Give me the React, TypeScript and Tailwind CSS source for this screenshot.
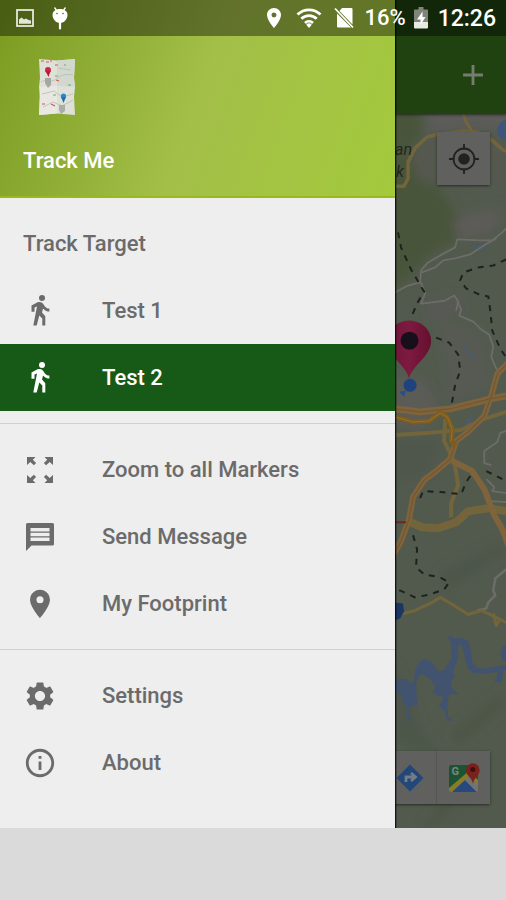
import { ComponentType, useState } from "react";
import {
    MdAdd,
    MdInfoOutline,
    MdPlace,
    MdSettings,
} from "react-icons/md";

interface IIcon {
    size?: number
    className?: string
}

interface IDrawerItem {
    label: string
    icon: ComponentType<IIcon>
}

function WalkIcon({ size, className }: IIcon) {
    return (
        <svg width={size} height={size} viewBox="0 0 34 34" fill="currentColor" className={className}>
            <circle cx="19" cy="4" r="3" />
            <path d="M14.500 8.300l-6 3.200v6.200h3v-4.300l2.500-1L10.300 31.500h3.400l2.600-10 3 3v7h3V22.200l-3.300-3.600 1-4.200c1.700 2 3.800 3.100 6.400 3.200v-3c-2.300-.2-4-1.300-5.200-3.200-1.400-2.500-3-3.900-6.700-3.100z" />
        </svg>
    )
}

function ZoomOutIcon({ size, className }: IIcon) {
    return (
        <svg width={size} height={size} viewBox="0 0 34 34" fill="currentColor" className={className}>
            <path d="M4 4h8.500L9.800 6.700l3.300 3.300-2.200 2.200-3.600-3.300L4 12z" />
            <path d="M30 4h-8.500l2.700 2.700-3.300 3.300 2.200 2.200 3.600-3.300L30 12z" />
            <path d="M4 30h8.500l-2.700-2.700 3.300-3.300-2.200-2.200-3.600 3.300L4 22z" />
            <path d="M30 30h-8.500l2.700-2.700-3.300-3.300 2.200-2.200 3.600 3.300L30 22z" />
        </svg>
    )
}

function MessageIcon({ size, className }: IIcon) {
    return (
        <svg width={size} height={size} viewBox="0 0 34 34" fill="currentColor" className={className}>
            <path fillRule="evenodd" d="M4.500 3h25A1.500 1.500 0 0 1 31 4.500v19.500a1.500 1.500 0 0 1-1.500 1.500H8.500L3 31V4.500A1.500 1.500 0 0 1 4.500 3zM7.500 8v3.500h19V8zM7.500 12.800v3.400h19v-3.400zM7.500 17.500V21h19v-3.500z" />
        </svg>
    )
}

const targets: IDrawerItem[] = [
    { label: "Test 1", icon: WalkIcon },
    { label: "Test 2", icon: WalkIcon },
]

const actions: IDrawerItem[] = [
    { label: "Zoom to all Markers", icon: ZoomOutIcon },
    { label: "Send Message", icon: MessageIcon },
    { label: "My Footprint", icon: MdPlace },
]

const general: IDrawerItem[] = [
    { label: "Settings", icon: MdSettings },
    { label: "About", icon: MdInfoOutline },
]

function StatusBar() {
    return (
        <div className="absolute inset-x-0 top-0 z-20 flex h-9 items-center bg-black/40 pl-4 pr-2.5 text-white">
            <svg width="18" height="18" viewBox="0 0 18 18" className="opacity-85">
                <rect x="1" y="1" width="16" height="16" fill="none" stroke="currentColor" strokeWidth="1.8" />
                <path d="M3 14.800V10.500l2.500-2 2.500 2 2-1 2.500 1.500 2.500.5v3.300z" fill="currentColor" />
            </svg>
            <svg width="18" height="24" viewBox="0 0 18 24" className="ml-[17px]">
                <path d="M3.500 1.500 6 5M14.500 1.500 12 5" stroke="currentColor" strokeWidth="1.300" />
                <path d="M9 3c4.500 0 7.500 2.500 7.500 6S13.500 17 9 17 1.500 12.500 1.500 9 4.500 3 9 3z" fill="currentColor" />
                <path d="M9 16v6.500" stroke="currentColor" strokeWidth="2.200" strokeLinecap="round" />
                <circle cx="6" cy="7.500" r=".8" fill="#4f6417" />
                <circle cx="12" cy="7.500" r=".8" fill="#4f6417" />
            </svg>
            <div className="ml-auto flex items-center">
                <MdPlace size={24} />
                <svg width="26" height="22" viewBox="0 0 26 22" fill="none" stroke="currentColor" strokeWidth="2.800" className="ml-2.5">
                    <path d="M1.500 7.500C8 1.200 18 1.200 24.500 7.500M5.300 11.800c4.400-4.200 11-4.200 15.400 0M9 16c2.300-2.200 5.700-2.200 8 0" />
                    <path d="M10.200 17.700a4 4 0 0 1 5.600 0L13 21z" fill="currentColor" stroke="none" />
                </svg>
                <svg width="20" height="22" viewBox="0 0 20 22" className="ml-3">
                    <path d="M8 1h9.500a1 1 0 0 1 1 1v15.500L5.500 4z" fill="currentColor" />
                    <path d="M3 6.500 17 20.500H4a1 1 0 0 1-1-1z" fill="currentColor" />
                    <path d="M1 1.500 19 20.500" stroke="currentColor" strokeWidth="1.800" />
                </svg>
                <span className="ml-2.5 text-[22px] font-medium leading-none">16%</span>
                <svg width="14" height="22" viewBox="0 0 14 22" className="ml-2">
                    <path d="M4.500 0h5v2.500H13a1 1 0 0 1 1 1V15H0V3.500a1 1 0 0 1 1-1h3.500z" fill="#7f857b" />
                    <path d="M0 15h14v5.500a1 1 0 0 1-1 1H1a1 1 0 0 1-1-1z" fill="#e8eae6" />
                    <path d="M8.500 4.500 3 12.500h3.500V18l5-8H8.500z" fill="#fff" />
                </svg>
                <span className="ml-2.5 text-[23px] font-medium leading-none">12:26</span>
            </div>
        </div>
    )
}

function AppThumbnail() {
    return (
        <svg width="36" height="56" viewBox="0 0 36 56" className="ml-4">
            <path d="M0 0 18 1.500 36 0 35 19 36 28 35 38 36 56 18 54.500 0 56 1 38 0 28 1 19z" fill="#dfe1d8" />
            <path d="M18 1.500 36 0 35 19 36 28 18 27z" fill="#d3d8cf" />
            <path d="M1 28 18 27v27.500L0 56z" fill="#e8e7e1" />
            <path d="M2 23c6-4 9 2 15-3s12-5 17-4M3 35l12-3 8 6 11-3M4 48l10-5 9 4 11-6M19 9l13 2" fill="none" stroke="#b3beb4" strokeWidth=".8" />
            <path d="M6 19h6v7l-3 3-3-5z" fill="#a3a9a2" />
            <path d="M20 46h6v6l-4 3-2-4z" fill="#a9ada8" />
            <path d="M2 2h3M7 3h3M11 2h2M16 6h3M17 21l3 1M12 45l4 2M3 45h3" stroke="#d4565e" strokeWidth="1.200" />
            <path d="M16 17h3M25 6h2M29 26h3M14 36h3" stroke="#77a869" strokeWidth="1.200" />
            <circle cx="9" cy="11" r="3" fill="#cf2744" />
            <path d="M6.500 12h5l-2 6z" fill="#b51d3a" />
            <circle cx="24.500" cy="37" r="2.600" fill="#2b87cc" />
            <path d="M22 38h5l-2.500 6z" fill="#1f6fae" />
        </svg>
    )
}

interface IDrawerSection {
    title?: string
    items: IDrawerItem[]
    selected: string
    onSelect: (label: string) => void
}

function DrawerSection({ title, items, selected, onSelect }: IDrawerSection) {
    return (
        <section className="py-3">
            {title ? (<h2 className="flex h-[67px] items-center px-[23px]">{title}</h2>) : (<></>)}
            <ul>
                {items.map(({ label, icon: Icon }) => (
                    <li key={label}>
                        <button
                            type="button"
                            onClick={() => onSelect(label)}
                            className={`${selected === label ? 'bg-[#175a17] text-white' : ''} flex h-[67px] w-full cursor-pointer items-center gap-[45px] px-[23px] text-left`}
                        >
                            <Icon size={34} className="shrink-0" />
                            {label}
                        </button>
                    </li>
                ))}
            </ul>
        </section>
    )
}

function MapCanvas() {
    return (
        <svg viewBox="395 114 111 714" preserveAspectRatio="xMinYMin slice" className="absolute inset-0 h-full w-full">
            <defs>
                <linearGradient id="pin" x1="0" x2="1">
                    <stop offset="0" stopColor="#6b1434" />
                    <stop offset=".5" stopColor="#7d1a40" />
                    <stop offset="1" stopColor="#65102f" />
                </linearGradient>
                <filter id="soft" x="-20%" y="-20%" width="140%" height="140%">
                    <feGaussianBlur stdDeviation="5" />
                </filter>
            </defs>
            <rect x="395" y="114" width="111" height="714" fill="#525a4e" />

            {/* terrain */}
            <g filter="url(#soft)">
                <path d="M390 110h30l2 25-14 18 24 27 16 20 14 28-5 12-27 14-24 26-16 6z" fill="#49543a" />
                <path d="M425 108h85v24l-36-4-44 6z" fill="#5b5c59" />
                <path d="M410 155l20-18 80 5v45l-60-6-30 2z" fill="#545950" />
                <path d="M452 222l18-8 26-5 4 10-12 14-30 5z" fill="#5d5c58" />
                <path d="M395 375l30 5 15 30-20 20-25-5z" fill="#5c5c57" />
                <path d="M425 300l35-5 2 15-30 12z" fill="#585954" />
                <path d="M440 320l40 10 10 60-40 10z" fill="#565a52" />
                <path d="M395 440h45l-10 30-35 15z" fill="#50564c" />
                <path d="M440 570l60-30 6 12-60 40zM395 660l30 70 20 30-50-20z" fill="#4e5649" />
                <path d="M450 730l50-40 6 14-50 44zM420 828l40-60 6 20-30 40z" fill="#4e5747" />
            </g>

            {/* water */}
            <circle cx="507" cy="130" r="10" fill="#3d557b" />
            <path d="M473 245l10-1 5 1-6 3-8-1z" fill="#435a78" />
            <path d="M464 346l6 9 6 3M472 415l-6 8 3-1-5 6" fill="none" stroke="#475b7a" strokeWidth="1.500" />
            <g transform="translate(390 625) scale(.3333)" fill="#42536f">
                <path d="M14 160l16-3 20 0 14 14 8-8 2-28 8-22 14-14 14-2 18 12 18 26 16-6 14-20 10-18-4-44-12-17h14l10 6 20-2 22 10 6 28 4 34 14 18 20 2 44-8 24-4v14l-10 4-4 38-12-3-10-2 8-14v-16l-34 6-36-2-18-14-10-38-8-30-8-4-4 24 2 20-12 26-2 16 4 10-12 16 2 18 8 8 14 12-26-2-6 16-2 20-10 14-10-8-6-6 8-12 6-16-18-2-14-12 8-10-4-12-16-20-18-10-14 6-6 24 2 38 4 24-18 0-20 4-10-16 2-18-16-8-22-2z" />
                <path d="M348 55l-12 6-6 18 6 22 12 6z" />
            </g>
            <path d="M412 698l-5 12 4 10M446 706l1 10 5 3" fill="none" stroke="#42536f" strokeWidth="2.500" />

            {/* minor roads */}
            <g fill="none" stroke="#6c6d68" strokeWidth="1.800" strokeLinejoin="round">
                <path d="M395 292l13-7 12-3 1-12 7-8 12-7 15-8 2-8 23 1h12l10-8 4-4" />
                <path d="M422 272l13-5 8-7 12-2 15-4 12-8 14-8" />
                <path d="M421 282l4 11-4 10 9-1 15-2 9-5 4 6-2 9" />
                <path d="M457 300l4 9-2 6 14 6 7 7 9 6 4 12-2 10 4 10 4 6" />
                <path d="M506 430l-6 2-3 9-13 9 0 12 7 2" />
                <path d="M506 568l-11 9-2 12 2 5-7 7-2 6-9 2" strokeWidth="2.500" />
                <path d="M486 478l8 8-2 4 14 2M490 500l16 1" />
            </g>

            {/* yellow roads */}
            <g fill="none" stroke="#73653b" strokeLinejoin="round">
                <path d="M396 186l8 0 4-8 0-16 7-14 12-11 12-3 24-3 14 1 12 6 14 12 6 2" strokeWidth="3.500" />
                <path d="M463 114l3 8 5 8" strokeWidth="3" />
                <path d="M395 434l32-2 34-3 20-10 25-8" strokeWidth="4" />
                <path d="M445 418l-1 22 10 20 4 24-7 18v14" strokeWidth="4" />
                <path d="M408 520l14 6 16 1 18-6 12-11 20-3 18 3" strokeWidth="8" />
                <path d="M434 526l20-6 12-7" stroke="#7c6039" strokeWidth="2" />
                <path d="M395 614l20-5 15-7 10-6 14 8 14 9 13-4 15 7 10 5M493 612l3 12 4-7" strokeWidth="3" />
            </g>

            {/* highways */}
            <g fill="none" strokeLinejoin="round">
                <path d="M395 408l25 3 30-3 40-10 16-3" stroke="#7f633b" strokeWidth="7" />
                <path d="M510 360l-13 13-6 22-7 20-16 16-12 9-6 18-14 12-12 9-11 17-4 22-8 22-10 18" stroke="#7f633b" strokeWidth="6" />
                <path d="M452 460l20 10 12 18 10 26 8 14 6 16" stroke="#7f633b" strokeWidth="6" />
                <path d="M395 408l25 3 30-3 40-10 16-3M510 360l-13 13-6 22-7 20-16 16-12 9-6 18-14 12-12 9-11 17-4 22-8 22-10 18" stroke="#725532" strokeWidth="1" />
                <path d="M395 416l18 5 16-1 11-8 7 4 5 12-1 12 4 5" stroke="#7d5c1c" strokeWidth="5" />
                <path d="M395 416l18 5 16-1 11-8 7 4 5 12-1 12" stroke="#927236" strokeWidth="1" />
                <path d="M395 521h11M395 552v8" stroke="#6b2a1e" strokeWidth="2" />
            </g>

            {/* trails */}
            <g fill="none" stroke="#1d231c" strokeWidth="2" strokeDasharray="6 6">
                <path d="M398 232l3 15 10 22 13 22-7 12-6 14" />
                <path d="M506 259l-13 6-15 2-15 5-3 8 6 8 13 6 9 2 2 14 2 20 8 18 8 12" />
                <path d="M436 337l13 5 9 12 2 16-5 14-4 22" />
                <path d="M420 497l3-7 18 1 20 2 5-12 4-6M486 470l20 10" />
                <path d="M413 534l4 14-1 18 8 7 16 3 9 5-5 7-14 5-15 3-15-7-5 0" />
            </g>

            <path d="M395 601l8 1 1 8-4 7-5 2z" fill="#1b3564" />

            <g fill="#23271f" fontFamily="Roboto, sans-serif" fontSize="16" fontStyle="italic">
                <text x="395" y="155">an</text>
                <text x="396" y="177">k</text>
            </g>

            {/* target marker */}
            <path d="M409 378c-3-14-22-22-22-38a22 20 0 0 1 44 0c0 16-19 24-22 38z" fill="url(#pin)" />
            <circle cx="409.500" cy="340" r="9" fill="#17101a" />
            <circle cx="410" cy="384.500" r="6.500" fill="#1f437f" />
            <path d="M399 391l7-1-2 6z" fill="#24508c" />
        </svg>
    )
}

function MapPanel() {
    return (
        <main className="relative flex flex-1 flex-col overflow-hidden">
            <header className="z-10 flex h-[114px] items-center justify-end bg-[#1f4210] pr-4 pt-9 text-[#777c71] shadow shadow-black/40">
                <button type="button" aria-label="Add target" className="cursor-pointer">
                    <MdAdd size={34} />
                </button>
            </header>
            <div className="relative flex-1">
                <MapCanvas />
                <button
                    type="button"
                    aria-label="My location"
                    className="absolute right-4 top-[18px] flex size-[53px] cursor-pointer items-center justify-center bg-[#60615f] shadow shadow-black/40"
                >
                    <svg width="30" height="30" viewBox="0 0 30 30" fill="none" stroke="#222" strokeWidth="1.800">
                        <circle cx="15" cy="15" r="10.500" />
                        <circle cx="15" cy="15" r="5.800" fill="#222" stroke="none" />
                        <path d="M15 0v5.500M15 24.500v5.500M0 15h5.500M24.500 15h5.500" />
                    </svg>
                </button>
                <div className="absolute bottom-6 right-4 flex bg-[#60615f] shadow shadow-black/40">
                    <button type="button" aria-label="Directions" className="flex size-[53px] cursor-pointer items-center justify-center border-r border-[#555653]">
                        <svg width="28" height="28" viewBox="0 0 28 28">
                            <path d="M14 .5 27.500 14 14 27.500.5 14z" fill="#234779" strokeLinejoin="round" />
                            <path d="M10 18v-5h8M15 9l4.500 4-4.500 4" fill="none" stroke="#747c86" strokeWidth="2.800" />
                        </svg>
                    </button>
                    <button type="button" aria-label="Open in Google Maps" className="flex size-[53px] cursor-pointer items-center justify-center">
                        <svg width="32" height="32" viewBox="0 0 32 32">
                            <path d="M3 3h25a2 2 0 0 1 2 2v23a2 2 0 0 1-2 2H3a2 2 0 0 1-2-2V5a2 2 0 0 1 2-2z" fill="#1c5433" />
                            <path d="M1 26 21 9l9 9v10a2 2 0 0 1-2 2H3a2 2 0 0 1-2-2z" fill="#8b7b27" />
                            <path d="M4 30 17 18l12 12z" fill="#28497f" />
                            <path d="M17 18l4-4 9 9v5a2 2 0 0 1-1 2z" fill="#73746f" />
                            <text x="3.500" y="13" fontFamily="Roboto, sans-serif" fontSize="11" fontWeight="700" fill="#7d857d">G</text>
                            <path d="M25 22c-1-7-7-8-7-14a6.800 6.800 0 0 1 13.600 0c0 6-5.600 7-6.600 14z" fill="#7b211c" />
                            <circle cx="24.800" cy="7.500" r="2.500" fill="#3d0e0c" />
                        </svg>
                    </button>
                </div>
            </div>
            <div className="absolute inset-y-0 left-0 z-10 w-0.5 bg-gradient-to-r from-black to-transparent" />
        </main>
    )
}

export default function App() {
    const [selected, setSelected] = useState("Test 2")

    return (
        <div className="min-h-screen bg-[#dadada] font-[Roboto,sans-serif]">
            <div className="relative flex">
                <StatusBar />
                <aside className="w-[78%] bg-[#eeeeee] pb-5 text-[22px] font-medium text-[#6b6b6b]">
                    <header className="h-[198px] border-b-2 border-[#98ba1c] bg-linear-110 from-[#7a9b1f] via-[#a3bf48] via-50% to-[#a4c93c] px-[23px] pt-[59px]">
                        <AppThumbnail />
                        <h1 className="mt-[30px] leading-8 text-white">Track Me</h1>
                    </header>
                    <nav className="divide-y divide-[#cfcfcf]">
                        <DrawerSection title="Track Target" items={targets} selected={selected} onSelect={setSelected} />
                        <DrawerSection items={actions} selected={selected} onSelect={setSelected} />
                        <DrawerSection items={general} selected={selected} onSelect={setSelected} />
                    </nav>
                </aside>
                <MapPanel />
            </div>
        </div>
    )
}
